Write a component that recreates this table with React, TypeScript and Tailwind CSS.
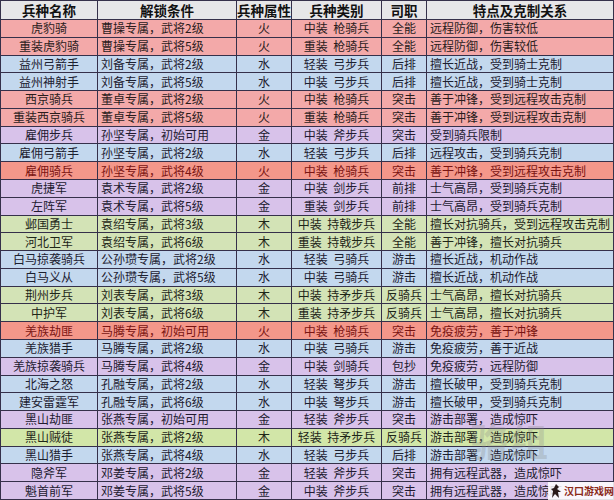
import React from "react";

type Row = [string, string, string, string, string, string, string];

// [name, cond, elem, type, role, desc, color]
const rows: Row[] = [
  ["虎豹骑", "曹操专属，武将2级", "火", "中装  枪骑兵", "全能", "远程防御，伤害较低", "r"],
  ["重装虎豹骑", "曹操专属，武将5级", "火", "重装  枪骑兵", "全能", "远程防御，伤害较低", "r"],
  ["益州弓箭手", "刘备专属，武将2级", "水", "轻装  弓步兵", "后排", "擅长近战，受到骑士克制", "b"],
  ["益州神射手", "刘备专属，武将5级", "水", "中装  弓步兵", "后排", "擅长近战，受到骑士克制", "b"],
  ["西京骑兵", "董卓专属，武将2级", "火", "中装  枪骑兵", "突击", "善于冲锋，受到远程攻击克制", "r"],
  ["重装西京骑兵", "董卓专属，武将5级", "火", "重装  枪骑兵", "突击", "善于冲锋，受到远程攻击克制", "r"],
  ["雇佣步兵", "孙坚专属，初始可用", "金", "中装  斧步兵", "突击", "受到骑兵限制", "p"],
  ["雇佣弓箭手", "孙坚专属，武将2级", "水", "轻装  弓步兵", "后排", "远程攻击，受到骑兵克制", "b"],
  ["雇佣骑兵", "孙坚专属，武将4级", "火", "中装  枪骑兵", "突击", "善于冲锋，受到远程攻击克制", "R"],
  ["虎捷军", "袁术专属，武将2级", "金", "中装  剑步兵", "前排", "士气高昂，受到骑兵克制", "p"],
  ["左阵军", "袁术专属，武将5级", "金", "重装  剑步兵", "前排", "士气高昂，受到骑兵克制", "p"],
  ["邺国勇士", "袁绍专属，武将3级", "木", "中装  持戟步兵", "全能", "擅长对抗骑兵，受到远程攻击克制", "g"],
  ["河北卫军", "袁绍专属，武将6级", "木", "重装  持戟步兵", "全能", "善于冲锋，擅长对抗骑兵", "g"],
  ["白马掠袭骑兵", "公孙瓒专属，武将2级", "水", "轻装  弓骑兵", "游击", "擅长近战，机动作战", "b"],
  ["白马义从", "公孙瓒专属，武将5级", "水", "中装  弓骑兵", "游击", "擅长近战，机动作战", "b"],
  ["荆州步兵", "刘表专属，武将3级", "木", "中装  持矛步兵", "反骑兵", "士气高昂，擅长对抗骑兵", "g"],
  ["中护军", "刘表专属，武将6级", "木", "重装  持矛步兵", "反骑兵", "士气高昂，擅长对抗骑兵", "g"],
  ["羌族劫匪", "马腾专属，初始可用", "火", "中装  枪骑兵", "突击", "免疫疲劳，善于冲锋", "R"],
  ["羌族猎手", "马腾专属，武将2级", "水", "中装  弓骑兵", "游击", "免疫疲劳，善于近战", "b"],
  ["羌族掠袭骑兵", "马腾专属，武将4级", "金", "中装  剑骑兵", "包抄", "免疫疲劳，远程防御", "p"],
  ["北海之怒", "孔融专属，武将2级", "水", "轻装  弩步兵", "游击", "擅长破甲，受到骑兵克制", "b"],
  ["建安雷霆军", "孔融专属，武将6级", "水", "中装  弩步兵", "游击", "擅长破甲，受到骑兵克制", "b"],
  ["黑山劫匪", "张燕专属，初始可用", "金", "轻装  斧步兵", "突击", "游击部署，造成惊吓", "p"],
  ["黑山贼徒", "张燕专属，武将2级", "木", "轻装  持矛步兵", "反骑兵", "游击部署，造成惊吓", "G"],
  ["黑山猎手", "张燕专属，武将4级", "水", "轻装  弓步兵", "后排", "游击部署，造成惊吓", "b"],
  ["隐斧军", "邓姜专属，武将2级", "金", "轻装  斧步兵", "突击", "拥有远程武器，造成惊吓", "p"],
  ["魁首前军", "邓姜专属，武将5级", "金", "中装  斧步兵", "突击", "拥有远程武器，造成惊吓", "p"],
];

const bg: Record<string, string> = {
  r: "bg-[#f3a9a9]",
  R: "bg-[#f4978a]",
  b: "bg-[#c3d8ee]",
  p: "bg-[#d8c2ea]",
  g: "bg-[#d3e3b6]",
  G: "bg-[#d2e6a8]",
};

const txt: Record<string, string> = {
  r: "text-[#2a1c1c]",
  R: "text-[#7a1512]",
  b: "text-[#1c2030]",
  p: "text-[#221a30]",
  g: "text-[#1e2618]",
  G: "text-[#1e2618]",
};

const cell = "flex items-center border-r border-b border-[#35304a] whitespace-nowrap min-h-0";

export default function App() {
  const headers = ["兵种名称", "解锁条件", "兵种属性", "兵种类别", "司职", "特点及克制关系"];
  return (
    <div
      className="relative w-[614px] h-[500px] overflow-hidden bg-white"
      style={{ fontFamily: '"Noto Sans CJK SC", "Noto Sans", sans-serif' }}
    >
      <div className="grid h-[500px] w-[614px] grid-cols-[97px_139px_55px_90px_45px_1fr] grid-rows-[19px_repeat(27,minmax(0,1fr))] border-l border-t border-[#35304a] text-[12px] leading-[14px]">
        {headers.map((h) => (
          <div key={h} className={`${cell} justify-center bg-[#e6e6e8] text-[13.5px] leading-[16px] font-bold text-[#111]`}>
            {h}
          </div>
        ))}
        {rows.map((r, i) => {
          const c = `${bg[r[6]]} ${txt[r[6]]}`;
          return (
            <React.Fragment key={i}>
              <div className={`${cell} ${c} justify-center`}>{r[0]}</div>
              <div className={`${cell} ${c} pl-[3px]`}>{r[1]}</div>
              <div className={`${cell} ${c} justify-center`}>{r[2]}</div>
              <div className={`${cell} ${c} justify-center whitespace-pre`}>{r[3]}</div>
              <div className={`${cell} ${c} justify-center`}>{r[4]}</div>
              <div className={`${cell} ${c} pl-[3px]`}>{r[5]}</div>
            </React.Fragment>
          );
        })}
      </div>
      {/* watermark */}
      <div className="pointer-events-none absolute left-[470px] top-[420px] text-[38px] leading-[40px] font-bold tracking-[2px] text-[#8a8a8a]/30">
        骆组
      </div>
      <div className="absolute left-[548px] top-[482px] flex h-[18px] w-[66px] items-center gap-[2px] bg-white/85 pl-[2px]">
        <svg width="12" height="16" viewBox="0 0 12 16">
          <path d="M6 1 L9 4 L7 6 L11 9 L8 9 L9 15 L5 11 L2 15 L3 8 L1 6 L4 5 Z" fill="#2a1a1a" />
        </svg>
        <span className="text-[10px] leading-[12px] font-bold text-[#8a2a1a]" style={{ fontFamily: '"Noto Sans CJK SC", serif' }}>
          汉口游戏网
        </span>
      </div>
    </div>
  );
}
